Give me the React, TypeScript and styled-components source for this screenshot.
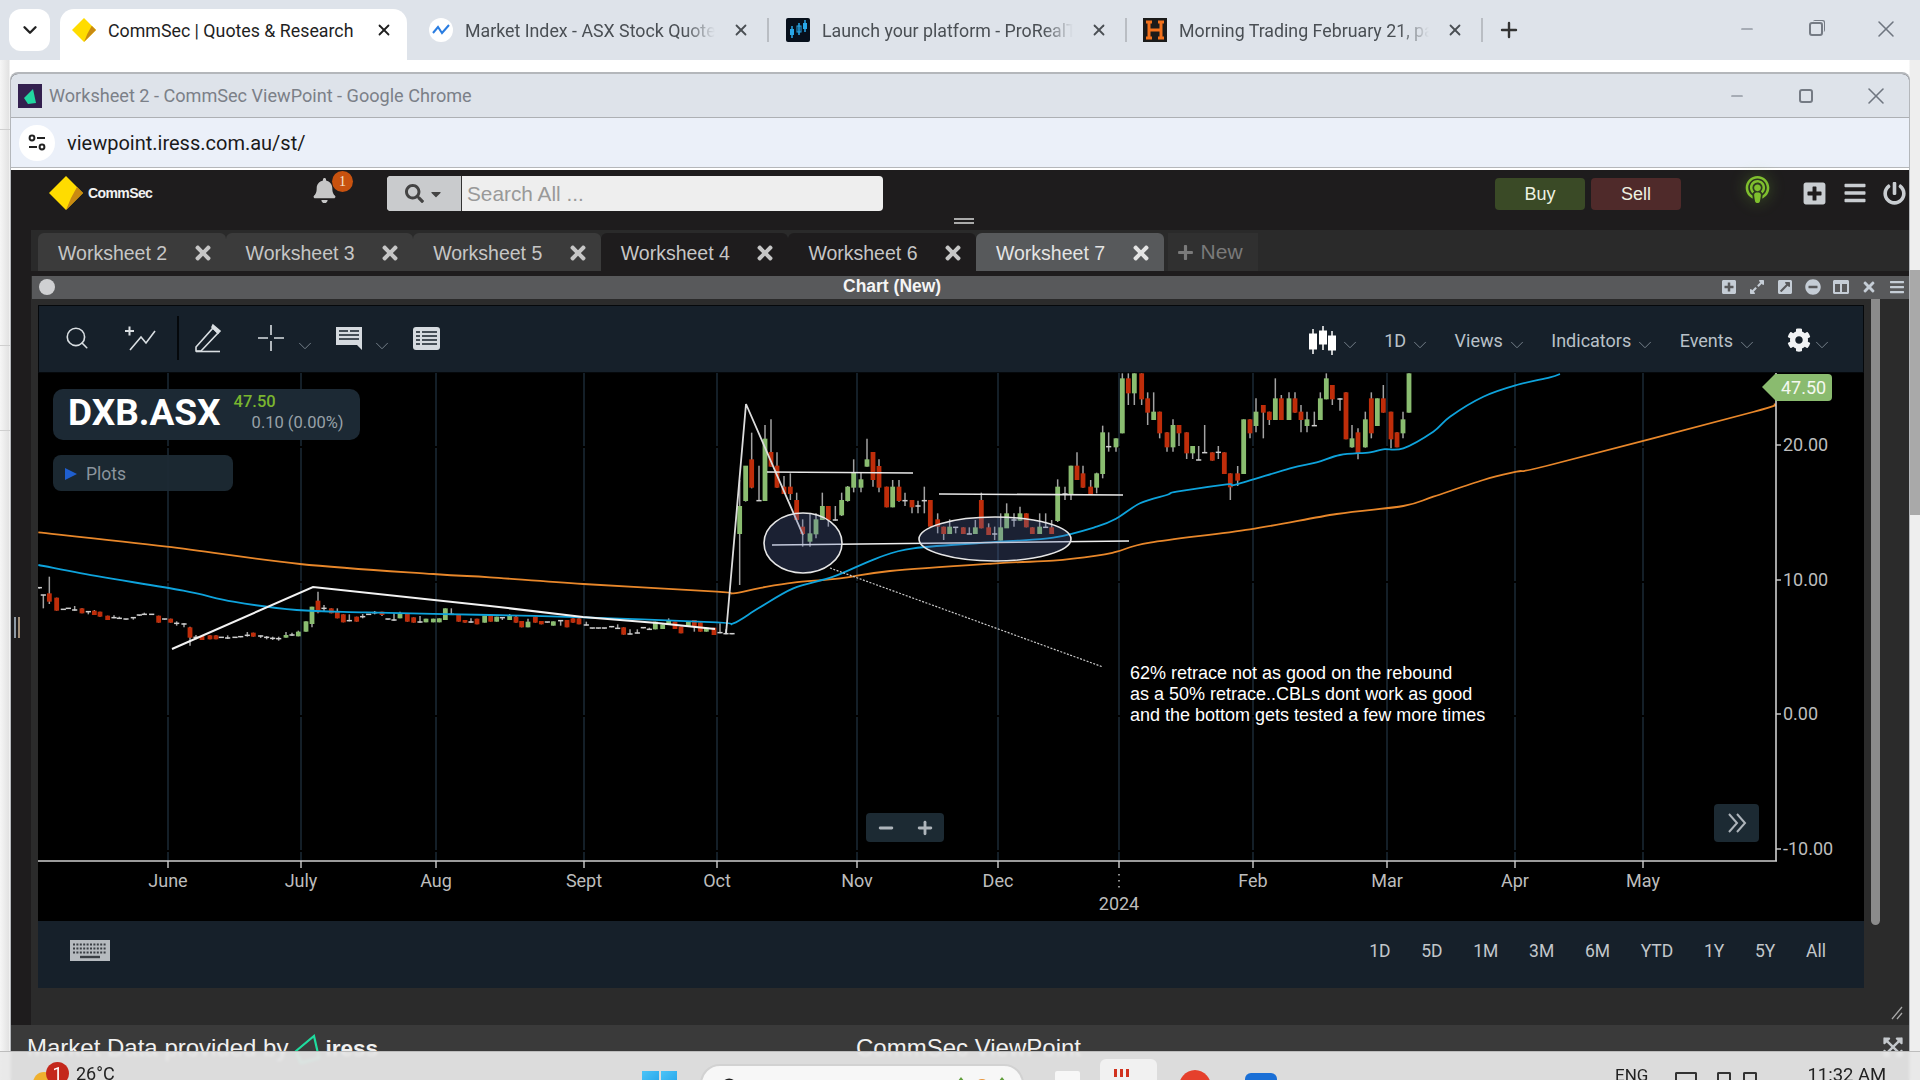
import React from 'react';
import styled, { createGlobalStyle } from 'styled-components';
import { Minus, Plus, Search, X, ChevronDown } from 'lucide-react';
import {
  FaBars,
  FaBell,
  FaCaretDown,
  FaCog,
  FaColumns,
  FaExpandAlt,
  FaExpandArrowsAlt,
  FaExternalLinkSquareAlt,
  FaMinusCircle,
  FaPlus,
  FaPlusSquare,
  FaPodcast,
  FaPowerOff,
  FaSearch,
  FaTimes,
} from 'react-icons/fa';

const sans = '"Liberation Sans", Arial, sans-serif';
const roboto = 'Roboto, "Liberation Sans", sans-serif';

const GlobalStyle = createGlobalStyle`
  html, body {
    margin: 0;
    width: 1920px;
    height: 1080px;
    overflow: hidden;
    background: #fff;
  }
  * { box-sizing: border-box; }
`;

const Screen = styled.div`
  position: relative;
  width: 1920px;
  height: 1080px;
  overflow: hidden;
  display: flex;
  flex-direction: column;
  font-family: ${roboto};
`;

/* outer browser */
const OuterStrip = styled.div`
  height: 60px;
  flex: none;
  background: #dee3ea;
  display: flex;
  align-items: flex-start;
  padding: 9px 0 0 9px;
`;

const TabListButton = styled.div`
  width: 41px;
  height: 42px;
  border-radius: 12px;
  background: #fff;
  display: flex;
  align-items: center;
  justify-content: center;
  color: #222;
  margin-right: 10px;
`;

const OuterTab = styled.div<{ $active?: boolean; $w: number; $pl: number }>`
  width: ${(p) => p.$w}px;
  height: 51px;
  flex: none;
  display: flex;
  align-items: center;
  padding: 0 ${(p) => (p.$active ? 14 : 17)}px 9px ${(p) => p.$pl}px;
  gap: 12px;
  border-radius: 14px 14px 0 0;
  background: ${(p) => (p.$active ? '#fff' : 'transparent')};
  color: ${(p) => (p.$active ? '#1f1f1f' : '#4a4f54')};
`;

const OuterTabTitle = styled.div<{ $fade?: boolean }>`
  flex: 1;
  overflow: hidden;
  white-space: nowrap;
  font-size: 17.8px;
  margin-right: ${(p) => (p.$fade ? 5 : 0)}px;
  mask-image: ${(p) => (p.$fade ? 'linear-gradient(to right, #000 88%, transparent 100%)' : 'none')};
`;

const OuterSeparator = styled.div`
  width: 2px;
  height: 24px;
  margin: 9px 0 0;
  background: #b9bdc3;
  flex: none;
`;

const NewTabButton = styled.div`
  margin: 9px 0 0 14px;
  color: #333;
  display: flex;
`;

const WindowControls = styled.div<{ $inner?: boolean }>`
  margin-left: auto;
  display: flex;
  align-items: center;
  gap: 49px;
  padding-right: ${(p) => (p.$inner ? 19 : 20)}px;
  color: #6f7680;
  height: 40px;
`;

const MinimizeIcon = styled(Minus)`
  margin-right: 4px;
`;

const RestoreIcon = styled.span<{ $double?: boolean }>`
  display: block;
  width: 14px;
  height: 14px;
  border: 2px solid #757b84;
  border-radius: 3px;
  box-shadow: ${(p) => (p.$double ? '2px -2px 0 -1px #dee3ea, 3px -3px 0 -1px #757b84' : 'none')};
`;

const OuterPage = styled.div`
  position: relative;
  flex: 1;
  min-height: 0;
  padding: 12px 10px 0;
  background: linear-gradient(to right, #f6f6f6, #e2e2e2 9px, #fff 10px, #fff 1909px, #eeeeee 1910px);
`;

const EdgeLine = styled.div<{ $top: number }>`
  position: absolute;
  left: 0;
  top: ${(p) => p.$top}px;
  width: 10px;
  height: 1px;
  background: #cfcfcf;
`;

const OuterThumb = styled.div`
  position: absolute;
  right: 0;
  top: 210px;
  width: 10px;
  height: 245px;
  background: #a9a9a9;
`;

/* inner window */
const InnerWindow = styled.div`
  height: 100%;
  display: flex;
  flex-direction: column;
  overflow: hidden;
  border: 1px solid #b4b7bb;
  border-top-width: 2px;
  border-bottom: none;
  border-radius: 8px 8px 0 0;
  background: #1e1c1d;
`;

const InnerTitleBar = styled.div`
  height: 44px;
  flex: none;
  display: flex;
  align-items: center;
  padding-left: 7px;
  gap: 7px;
  background: #dee3ea;
  border-bottom: 1px solid #adb0b4;
  color: #7b8088;
  font-size: 18.1px;
`;

const AddressBar = styled.div`
  height: 50px;
  flex: none;
  display: flex;
  align-items: center;
  padding-left: 8px;
  gap: 12px;
  background: #ebf0f9;
  border-bottom: 1px solid #b5b7ba;
  color: #1a1a1a;
  font-size: 20px;
`;

const SiteInfo = styled.div`
  width: 36px;
  height: 36px;
  border-radius: 50%;
  background: #fff;
  display: flex;
  align-items: center;
  justify-content: center;
`;

const WhiteRule = styled.div`
  height: 2px;
  flex: none;
  background: #fff;
`;

/* viewpoint header */
const AppHeader = styled.div`
  position: relative;
  height: 60px;
  flex: none;
  display: flex;
  align-items: flex-start;
  padding: 6px 0 0 38px;
  background: #1e1c1d;
`;

const Brand = styled.div`
  display: flex;
  align-items: center;
  gap: 5px;
  width: 263px;
  height: 34px;
  color: #f2f2f2;
  font-family: ${sans};
  font-size: 14px;
  font-weight: 700;
  letter-spacing: -0.6px;
`;

const BellWrap = styled.div`
  position: relative;
  width: 75px;
  height: 34px;
  color: #c6c6c6;
  padding-top: 2px;
`;

const Badge = styled.div`
  position: absolute;
  left: 20px;
  top: -5px;
  width: 21px;
  height: 21px;
  border-radius: 50%;
  background: #c8520f;
  color: #f4e4d4;
  font-family: "Liberation Serif", serif;
  font-size: 14px;
  line-height: 21px;
  text-align: center;
`;

const SearchBox = styled.div`
  width: 496px;
  height: 35px;
  display: flex;
  border-radius: 4px;
  overflow: hidden;
  background: #eeeeee;
`;

const SearchButton = styled.div`
  width: 75px;
  flex: none;
  display: flex;
  align-items: center;
  justify-content: center;
  gap: 4px;
  background: #c9cbcd;
  border-right: 1px solid #333;
  color: #444;
`;

const SearchPlaceholder = styled.div`
  padding-left: 5px;
  font-family: ${sans};
  font-size: 20.8px;
  line-height: 35px;
  color: #999;
`;

const TradeButton = styled.div<{ $sell?: boolean }>`
  width: 90px;
  height: 32px;
  margin: 2px 0 0 ${(p) => (p.$sell ? 6 : 612)}px;
  border-radius: 4px;
  background: ${(p) => (p.$sell ? '#4f2a2a' : '#3a4a26')};
  color: #eef2e2;
  font-family: ${sans};
  font-size: 18px;
  line-height: 32px;
  text-align: center;
`;

const LiveIcon = styled.div`
  margin-left: 63px;
  color: #7fbf2e;
  display: flex;
  filter: drop-shadow(0 0 8px rgba(120, 190, 50, 0.45));
`;

const HeaderIcons = styled.div`
  margin-left: 31px;
  display: flex;
  align-items: center;
  gap: 16px;
  height: 34px;
  color: #c9cdd1;
`;

const Grabber = styled.div`
  position: absolute;
  left: 943px;
  top: 48px;
  width: 20px;
  height: 6px;
  border-top: 2px solid #aaa;
  border-bottom: 2px solid #aaa;
`;

/* workspace */
const Workspace = styled.div`
  height: 795px;
  flex: none;
  display: flex;
`;

const LeftRail = styled.div`
  width: 20px;
  flex: none;
  background: #1e1c1d;
  display: flex;
  align-items: center;
  padding-left: 3px;
`;

const RailHandle = styled.div`
  width: 6px;
  height: 21px;
  border-left: 2px solid #8f9aa5;
  border-right: 2px solid #a38f78;
`;

const WorkColumn = styled.div`
  flex: 1;
  min-width: 0;
  display: flex;
  flex-direction: column;
  background: #2b2b2b;
`;

const SheetTabs = styled.div`
  height: 46px;
  flex: none;
  display: flex;
  align-items: flex-start;
  padding: 3px 0 0 7px;
  background: linear-gradient(to bottom, #2a2a2a 41px, #1e1c1d 41px);
`;

const SheetTab = styled.div<{ $tone: 'mid' | 'dark' | 'active' }>`
  width: 187.6px;
  height: 38px;
  display: flex;
  align-items: center;
  justify-content: space-between;
  padding: 2px 12px 0 20px;
  border-radius: 6px 6px 0 0;
  font-family: ${sans};
  font-size: 19.5px;
  color: ${(p) => (p.$tone === 'active' ? '#e4e4e4' : '#c6c6c6')};
  background: ${(p) => (p.$tone === 'active' ? '#57595b' : p.$tone === 'mid' ? '#3b3b3b' : '#1e1c1d')};
`;

const NewSheet = styled.div`
  width: 90px;
  height: 38px;
  margin-left: 4px;
  display: flex;
  align-items: center;
  padding: 0 0 0 9px;
  gap: 7px;
  background: #303030;
  color: #7a7a7a;
  font-family: ${sans};
  font-size: 21px;
`;

const PanelTitle = styled.div`
  height: 23px;
  flex: none;
  display: flex;
  align-items: center;
  padding: 0 0 1px 7px;
  background: #58595b;
  margin-left: 1px;
`;

const PanelDot = styled.div`
  width: 16px;
  height: 16px;
  border-radius: 50%;
  background: #cfd0d2;
  flex: none;
`;

const PanelName = styled.div`
  margin: 0 0 2px 788px;
  font-family: ${sans};
  font-size: 17.5px;
  font-weight: 700;
  color: #f5f5f5;
`;

const PanelIcons = styled.div`
  margin-left: auto;
  display: flex;
  align-items: center;
  gap: 12px;
  padding-right: 4px;
  color: #c5cdd6;
`;

const PanelBody = styled.div`
  position: relative;
  flex: 1;
  min-height: 0;
  display: flex;
  padding: 6px 0 0 7px;
`;

const ChartColumn = styled.div`
  width: 1826px;
  flex: none;
  display: flex;
  flex-direction: column;
`;

const PanelScroll = styled.div`
  width: 9px;
  height: 626px;
  margin: -6px 0 0 7px;
  border-radius: 0 0 5px 5px;
  background: #8b8b8b;
`;

const ResizeGrip = styled.div`
  position: absolute;
  right: 6px;
  bottom: 5px;
  display: flex;
  color: #a8a8a8;
`;

const Toolbar = styled.div`
  height: 68px;
  flex: none;
  display: flex;
  align-items: center;
  padding: 0 30px 2px 7px;
  background: #16202a;
  border: 1px solid #05080b;
  color: #d9dee2;
`;

const ToolButton = styled.div<{ $w: number; $ml?: number; $drop?: boolean }>`
  width: ${(p) => p.$w}px;
  margin-left: ${(p) => p.$ml ?? 0}px;
  padding-top: ${(p) => (p.$drop ? 6 : 0)}px;
  flex: none;
  display: flex;
  align-items: center;
  justify-content: center;
`;

const ToolSeparator = styled.div`
  width: 2px;
  height: 44px;
  margin-left: 5px;
  background: #05080b;
  flex: none;
`;

const Caret = styled.span`
  display: flex;
  color: #7c8791;
  margin-top: 10px;
`;

const ToolMenus = styled.div`
  margin-left: auto;
  margin-top: 4px;
  display: flex;
  align-items: center;
`;

const ToolMenu = styled.div<{ $ml?: number; $gap?: number }>`
  display: flex;
  align-items: center;
  gap: ${(p) => p.$gap ?? 3}px;
  margin-left: ${(p) => p.$ml ?? 23.5}px;
  font-size: 18px;
  color: #b9c1c8;
`;

const PlotArea = styled.div`
  position: relative;
  height: 548px;
  flex: none;
  background: #000;
`;

const ChartSvg = styled.svg`
  display: block;
  width: 1826px;
  height: 548px;
`;

const QuoteCard = styled.div`
  position: absolute;
  left: 15px;
  top: 16px;
  width: 307px;
  height: 51px;
  display: flex;
  align-items: center;
  padding-left: 15px;
  border-radius: 10px;
  background: #1c2934;
`;

const Symbol = styled.div`
  margin-top: -5px;
  font-size: 37px;
  font-weight: 700;
  color: #fff;
`;

const QuoteFigures = styled.div`
  margin: -5px 0 0 13px;
  font-size: 16.5px;
  line-height: 21px;
`;

const LastPrice = styled.div`
  color: #7ab52f;
  font-weight: 500;
`;

const PriceChange = styled.div`
  margin-left: 18px;
  color: #98a1a8;
`;

const PlotsCard = styled.div`
  position: absolute;
  left: 15px;
  top: 82px;
  width: 180px;
  height: 36px;
  display: flex;
  align-items: center;
  gap: 9px;
  padding: 1px 0 0 12px;
  border-radius: 8px;
  background: rgba(29, 42, 52, 0.94);
  color: #8b959d;
  font-size: 17.5px;
`;

const PlotsArrow = styled.span`
  width: 0;
  height: 0;
  border-left: 12px solid #1f5fcf;
  border-top: 6.5px solid transparent;
  border-bottom: 6.5px solid transparent;
`;

const ZoomControl = styled.div`
  position: absolute;
  left: 828px;
  top: 440px;
  width: 78px;
  height: 29px;
  display: flex;
  align-items: center;
  justify-content: space-around;
  border-radius: 4px;
  background: #1c2a33;
  color: #aeb5bb;
`;

const ScrollEnd = styled.div`
  position: absolute;
  left: 1676px;
  top: 431px;
  width: 45px;
  height: 38px;
  display: flex;
  align-items: center;
  justify-content: center;
  border-radius: 4px;
  background: #1c2a33;
  color: #aeb5bb;
`;

const PriceTag = styled.div`
  position: absolute;
  left: 1737px;
  top: 1px;
  width: 57px;
  height: 27px;
  border-radius: 0 4px 4px 0;
  background: #8abb6f;
  color: #f4f8f0;
  font-size: 18px;
  line-height: 27px;
  padding-left: 6px;
  &::before {
    content: '';
    position: absolute;
    left: -13px;
    top: 0;
    border-right: 13px solid #8abb6f;
    border-top: 13.5px solid transparent;
    border-bottom: 13.5px solid transparent;
  }
`;

const RangeBar = styled.div`
  height: 67px;
  flex: none;
  display: flex;
  align-items: center;
  padding: 0 38px 8px 32px;
  background: #16202a;
`;

const RangeList = styled.div`
  margin-left: auto;
  display: flex;
  gap: 30.7px;
  font-size: 17.5px;
  color: #c2c7cb;
`;

/* footer */
const Footer = styled.div`
  height: 60px;
  flex: none;
  display: grid;
  grid-template-columns: 1fr auto 1fr;
  padding: 9px 5px 0 16px;
  background: #3a3a3a;
  color: #f0f0f0;
  font-family: ${sans};
  font-size: 24px;
`;

const FooterLeft = styled.div`
  display: flex;
  align-items: flex-start;
  gap: 6px;
`;

const IressName = styled.span`
  margin: 2px 0 0 -1px;
  font-size: 22.5px;
  font-weight: 700;
`;

const FooterCenter = styled.div`
  margin-left: 6px;
`;

const FooterRight = styled.div`
  justify-self: end;
  color: #c4c8cc;
  display: flex;
  padding-top: 2px;
`;

/* taskbar */
const Taskbar = styled.div`
  position: absolute;
  left: 0;
  right: 0;
  bottom: 0;
  height: 29px;
  display: flex;
  overflow: hidden;
  background: rgba(232, 232, 232, 0.93);
  backdrop-filter: blur(1.5px);
  border-top: 1px solid #bdbdbd;
  color: #222;
`;

const Weather = styled.div`
  position: relative;
  width: 113px;
  margin-left: 33px;
  flex: none;
  font-size: 18px;
  padding: 12px 0 0 43px;
  line-height: 20px;
`;

const Sun = styled.div`
  position: absolute;
  left: 0;
  top: 20px;
  width: 22px;
  height: 22px;
  border-radius: 50%;
  background: #efb02e;
`;

const WeatherBadge = styled.div`
  position: absolute;
  left: 13px;
  top: 10px;
  width: 23px;
  height: 23px;
  border-radius: 50%;
  background: #c4281c;
  color: #fff;
  font-size: 18px;
  line-height: 23px;
  text-align: center;
`;

const StartTiles = styled.div`
  width: 35px;
  margin: 19px 0 0 496px;
  flex: none;
  display: grid;
  grid-template-columns: 1fr 1fr;
  gap: 2px;
`;

const StartTile = styled.div`
  height: 20px;
  background: linear-gradient(135deg, #4cc4f7, #1e9fe8);
`;

const TaskSearch = styled.div`
  width: 324px;
  height: 40px;
  margin: 12px 0 0 23px;
  flex: none;
  display: flex;
  align-items: flex-start;
  justify-content: space-between;
  padding: 11px 10px 0 18px;
  border: 2px solid #d2d2d2;
  border-radius: 22px;
  background: #f7f7f7;
  color: #222;
`;

const SearchArt = styled.div`
  display: flex;
  gap: 5px;
`;

const TaskIconBox = styled.div<{ $ml: number; $w: number; $bg: string; $top: number; $radius?: string }>`
  width: ${(p) => p.$w}px;
  height: 40px;
  margin: ${(p) => p.$top}px 0 0 ${(p) => p.$ml}px;
  flex: none;
  background: ${(p) => p.$bg};
  border-radius: ${(p) => p.$radius ?? '4px'};
`;

const AppTile = styled.div`
  width: 57px;
  height: 40px;
  margin: 7px 0 0 20px;
  flex: none;
  padding: 10px 0 0 14px;
  border-radius: 6px;
  background: #f1f1f1;
`;

const AppDots = styled.div`
  width: 15px;
  height: 8px;
  background: repeating-linear-gradient(to right, #d1321f 0 3px, transparent 3px 6px);
`;

const Tray = styled.div`
  margin-left: 338px;
  display: flex;
  align-items: flex-start;
  padding-top: 13px;
  font-size: 17px;
  line-height: 20px;
`;

const TrayGlyph = styled.div<{ $ml: number; $w: number }>`
  width: ${(p) => p.$w}px;
  height: 12px;
  margin: 7px 0 0 ${(p) => p.$ml}px;
  border: 2px solid #333;
  border-bottom: none;
  border-radius: 2px 2px 0 0;
`;

const Clock = styled.div`
  margin-left: 50px;
  font-size: 18.5px;
  white-space: nowrap;
`;

/* artwork */
const Diamond = ({ size = 34 }: { size?: number }) => (
  <svg width={size} height={size} viewBox="0 0 34 34">
    <polygon points="17,0 34,17 17,34 0,17" fill="#ffdc00" />
    <polygon points="28,11 34,17 17,34 22,22" fill="#c98a12" />
  </svg>
);

const MarketIndexIcon = () => (
  <svg width="24" height="24" viewBox="0 0 24 24">
    <circle cx="12" cy="12" r="12" fill="#fff" />
    <path d="M4 15 9 9l4 6 7-8" fill="none" stroke="#2a7de1" strokeWidth="2" />
  </svg>
);

const ProRealIcon = () => (
  <svg width="24" height="24" viewBox="0 0 24 24">
    <rect width="24" height="24" rx="2" fill="#07101c" />
    <path d="M6 8v12M13 5v12M19 2v12" stroke="#29a7e8" strokeWidth="1.5" />
    <rect x="4" y="11" width="4" height="6" fill="#29a7e8" />
    <rect x="11" y="8" width="4" height="6" fill="none" stroke="#29a7e8" />
    <rect x="17" y="5" width="4" height="6" fill="#29a7e8" />
  </svg>
);

const HeadlineIcon = () => (
  <svg width="24" height="24" viewBox="0 0 24 24">
    <rect width="24" height="24" fill="#1a1a1a" />
    <path d="M3 4h6M15 4h6M3 20h6M15 20h6M6 4v16M18 4v16M6 12h12" stroke="#f2711c" strokeWidth="3" fill="none" />
  </svg>
);

const IressFavicon = () => (
  <svg width="24" height="24" viewBox="0 0 24 24">
    <rect width="24" height="24" fill="#33204f" />
    <polygon points="15,5 18,19 10,20 6,14" fill="#22d6a0" />
  </svg>
);

const SiteInfoIcon = () => (
  <svg width="20" height="20" viewBox="0 0 20 20" fill="none" stroke="#222" strokeWidth="2">
    <circle cx="5" cy="5" r="2.4" />
    <path d="M10 5h8M2 14h8" />
    <circle cx="15" cy="14" r="2.4" />
  </svg>
);

const AddLineIcon = () => (
  <svg width="34" height="28" viewBox="0 0 34 28" fill="none" stroke="currentColor" strokeWidth="1.6">
    <path d="M2 7h9M6.5 2.5v9" strokeWidth="2" />
    <path d="M7 26l11-13 5 6 9-12" />
  </svg>
);

const PencilIcon = () => (
  <svg width="28" height="30" viewBox="0 0 28 30" fill="none" stroke="currentColor" strokeWidth="1.6">
    <path d="M2 24 19 5l5 5L7 28H2z" />
    <path d="M19 2l7 6-2 2-6-6z" fill="currentColor" />
    <path d="M2 28.5h24" />
  </svg>
);

const CrossIcon = () => (
  <svg width="26" height="26" viewBox="0 0 26 26" stroke="currentColor" strokeWidth="1.6">
    <path d="M0 13h10M16 13h10M13 0v10M13 16v10" />
  </svg>
);

const CommentIcon = () => (
  <svg width="27" height="24" viewBox="0 0 27 24">
    <path d="M0 1h26v23l-5-5H0z" fill="#d5dadf" />
    <path d="M3 5h9M3 9h20M3 13h20M14 5h9" stroke="#16202a" strokeWidth="1.4" />
  </svg>
);

const TableIcon = () => (
  <svg width="27" height="23" viewBox="0 0 27 23">
    <rect width="27" height="23" rx="3" fill="#d5dadf" />
    <path d="M3 5h4M9 5h15M3 9h4M9 9h15M3 13h4M9 13h15M3 17h4M9 17h15" stroke="#16202a" strokeWidth="1.3" />
  </svg>
);

const CandlesIcon = () => (
  <svg width="27" height="29" viewBox="0 0 27 29" fill="#fff" stroke="#fff">
    <path d="M4 3v25M14 0v24M23 5v24" strokeWidth="1.5" />
    <rect x="0.5" y="8" width="7" height="15" />
    <rect x="10.5" y="5" width="7" height="13" />
    <rect x="19.5" y="10" width="7" height="14" />
  </svg>
);

const DoubleChevron = () => (
  <svg width="22" height="22" viewBox="0 0 22 22" fill="none" stroke="currentColor" strokeWidth="2">
    <path d="M3 2l8 9-8 9M11 2l8 9-8 9" />
  </svg>
);

const KeyboardIcon = () => (
  <svg width="40" height="21" viewBox="0 0 40 21">
    <rect width="40" height="21" fill="#b6bbbf" />
    <path d="M3 4.5h34M3 8.5h34M3 12.5h34" stroke="#3a3f44" strokeWidth="2" strokeDasharray="2 1.4" />
    <path d="M10 17h20" stroke="#3a3f44" strokeWidth="2.4" />
  </svg>
);

const IressMark = () => (
  <svg width="26" height="30" viewBox="0 0 26 30" fill="none" stroke="#1fdc9e" strokeWidth="2.2">
    <polygon points="2,17 20,2 25,24 7,29" />
  </svg>
);

const GripIcon = () => (
  <svg width="12" height="14" viewBox="0 0 12 14" stroke="currentColor" strokeWidth="1.3">
    <path d="M1 13 11 1M6 13l5-6" />
  </svg>
);

/* chart data: rows were read off zoomed crops, so each section keeps its own origin */
type Row = [number, number, number, number, number, 'r' | 'g' | 'd'];
type Candle = { x: number; wickTop: number; wickBottom: number; bodyTop: number; bodyBottom: number; kind: Row[5] };

const section = (ox: number, oy: number, rows: Row[]): Candle[] =>
  rows.map(([x, wt, wb, bt, bb, kind]) => ({
    x: ox + x / 3,
    wickTop: oy + wt / 3,
    wickBottom: oy + wb / 3,
    bodyTop: oy + bt / 3,
    bodyBottom: oy + bb / 3,
    kind,
  }));

const trace = (ox: number, oy: number, pts: number[][]) => pts.map(([x, y]) => [ox + x / 3, oy + y / 3]);

// catmull-rom through the read-off points, the moving averages are curves in the picture
const smooth = (pts: number[][]) => {
  let d = `M${pts[0][0]} ${pts[0][1]}`;
  for (let i = 0; i < pts.length - 1; i += 1) {
    const p0 = pts[i - 1] ?? pts[i];
    const p1 = pts[i];
    const p2 = pts[i + 1];
    const p3 = pts[i + 2] ?? p2;
    const c1 = [p1[0] + (p2[0] - p0[0]) / 6, p1[1] + (p2[1] - p0[1]) / 6];
    const c2 = [p2[0] - (p3[0] - p1[0]) / 6, p2[1] - (p3[1] - p1[1]) / 6];
    d += `C${c1[0].toFixed(1)} ${c1[1].toFixed(1)} ${c2[0].toFixed(1)} ${c2[1].toFixed(1)} ${p2[0].toFixed(1)} ${p2[1].toFixed(1)}`;
  }
  return d;
};

const candles: Candle[] = [
  ...section(0, 280, [
    [118, 922, 926, 923, 923, 'd'], [130, 945, 985, 945, 945, 'd'], [148, 890, 972, 940, 965, 'r'], [170, 953, 992, 953, 992, 'r'],
    [190, 988, 990, 988, 988, 'd'], [205, 985, 987, 985, 985, 'd'], [224, 978, 992, 990, 990, 'd'], [246, 985, 1000, 985, 1000, 'r'],
    [265, 995, 1003, 995, 995, 'd'], [283, 990, 1005, 992, 1005, 'r'], [300, 995, 1010, 995, 1010, 'r'], [323, 1007, 1020, 1007, 1020, 'r'],
    [342, 1006, 1015, 1013, 1013, 'd'], [358, 1010, 1017, 1015, 1015, 'd'], [378, 1017, 1019, 1017, 1017, 'd'], [400, 1012, 1019, 1013, 1013, 'd'],
    [418, 1005, 1008, 1005, 1005, 'd'], [433, 998, 1005, 1003, 1003, 'd'], [455, 1003, 1005, 1003, 1003, 'd'], [476, 1007, 1028, 1007, 1028, 'r'],
    [494, 1017, 1019, 1017, 1017, 'd'], [512, 1016, 1028, 1016, 1028, 'r'], [530, 1024, 1037, 1030, 1030, 'd'], [552, 1030, 1042, 1032, 1032, 'd'],
    [570, 1040, 1097, 1042, 1073, 'r'], [588, 1065, 1078, 1072, 1072, 'd'], [606, 1068, 1080, 1068, 1080, 'r'], [630, 1066, 1078, 1066, 1078, 'r'],
    [648, 1066, 1078, 1066, 1078, 'r'], [664, 1072, 1074, 1072, 1072, 'd'], [683, 1066, 1077, 1074, 1074, 'd'], [705, 1072, 1074, 1072, 1072, 'd'],
    [722, 1070, 1072, 1070, 1070, 'd'], [742, 1056, 1070, 1066, 1066, 'd'], [760, 1058, 1070, 1058, 1070, 'r'], [782, 1066, 1074, 1068, 1068, 'd'],
    [800, 1068, 1078, 1072, 1072, 'd'], [818, 1070, 1080, 1075, 1075, 'd'], [836, 1070, 1082, 1076, 1076, 'd'], [858, 1056, 1073, 1065, 1073, 'g'],
    [876, 1058, 1068, 1065, 1065, 'd'], [895, 1052, 1069, 1055, 1069, 'g'], [918, 1024, 1055, 1024, 1055, 'g'], [936, 980, 1042, 980, 1032, 'g'],
    [954, 935, 1000, 962, 997, 'r'], [972, 975, 995, 985, 985, 'd'], [994, 985, 1000, 985, 1000, 'r'], [1012, 985, 1015, 995, 1015, 'r'],
    [1030, 1003, 1027, 1003, 1027, 'r'], [1048, 1003, 1024, 1022, 1022, 'd'], [1070, 1010, 1025, 1010, 1025, 'r'], [1088, 1002, 1015, 1010, 1010, 'd'],
    [1106, 1003, 1005, 1003, 1003, 'd'], [1124, 993, 1003, 998, 998, 'd'], [1146, 995, 1008, 995, 1005, 'r'], [1164, 1017, 1019, 1017, 1017, 'd'],
    [1182, 1000, 1022, 1020, 1020, 'd'], [1200, 995, 1015, 1002, 1015, 'g'], [1222, 1002, 1025, 1002, 1025, 'r'], [1241, 1012, 1028, 1012, 1028, 'r'],
    [1260, 1008, 1028, 1026, 1026, 'd'], [1278, 1016, 1027, 1016, 1027, 'g'], [1300, 1016, 1027, 1016, 1027, 'g'], [1318, 1015, 1027, 1015, 1027, 'g'],
    [1336, 985, 1020, 985, 1020, 'g'], [1354, 985, 1005, 1003, 1003, 'd'], [1376, 1005, 1025, 1005, 1025, 'r'], [1395, 1020, 1028, 1020, 1028, 'r'],
    [1413, 1015, 1028, 1026, 1026, 'd'], [1431, 1016, 1033, 1016, 1033, 'r'], [1454, 1007, 1028, 1007, 1028, 'g'], [1472, 1007, 1025, 1007, 1025, 'r'],
    [1490, 1010, 1025, 1010, 1025, 'g'],
  ]),
  ...section(490, 570, [
    [37, 143, 150, 143, 143, 'd'], [59, 132, 150, 135, 150, 'g'], [78, 135, 158, 140, 158, 'r'], [95, 153, 172, 153, 172, 'r'],
    [114, 146, 172, 155, 172, 'g'], [136, 140, 158, 140, 158, 'r'], [154, 153, 163, 153, 163, 'r'], [172, 156, 158, 156, 156, 'd'],
    [190, 154, 167, 154, 167, 'g'], [212, 152, 167, 152, 152, 'd'], [231, 150, 172, 150, 172, 'r'], [249, 145, 158, 145, 158, 'r'],
    [267, 145, 163, 145, 163, 'r'], [289, 155, 166, 165, 165, 'd'], [307, 174, 176, 174, 174, 'd'], [325, 174, 176, 174, 174, 'd'],
    [343, 174, 176, 174, 174, 'd'], [365, 170, 172, 170, 170, 'd'], [383, 163, 176, 175, 175, 'd'], [401, 172, 194, 172, 194, 'r'],
    [420, 178, 193, 192, 192, 'd'], [442, 178, 190, 189, 189, 'd'], [460, 173, 175, 173, 173, 'd'], [478, 173, 180, 178, 178, 'd'],
    [496, 155, 178, 155, 178, 'g'], [518, 163, 177, 163, 177, 'g'], [536, 145, 163, 150, 163, 'g'], [555, 155, 177, 155, 177, 'r'],
    [573, 170, 190, 170, 190, 'r'], [595, 155, 168, 155, 168, 'g'], [613, 150, 185, 150, 170, 'r'], [631, 157, 185, 157, 185, 'r'],
    [649, 173, 185, 173, 185, 'g'], [672, 173, 195, 173, 195, 'r'], [690, 160, 190, 188, 188, 'd'], [708, 178, 193, 191, 191, 'd'],
    [726, 191, 193, 191, 191, 'd'],
  ]),
  ...section(700, 370, [
    [119, 330, 645, 408, 492, 'g'], [137, 290, 395, 287, 393, 'g'], [155, 188, 355, 268, 353, 'r'], [177, 287, 393, 392, 392, 'd'],
    [195, 165, 393, 206, 393, 'g'], [213, 148, 290, 246, 290, 'r'], [231, 247, 353, 287, 353, 'r'], [252, 318, 372, 350, 372, 'r'],
    [271, 310, 390, 350, 372, 'r'], [290, 368, 450, 390, 450, 'r'], [308, 448, 530, 470, 492, 'r'], [330, 430, 530, 490, 515, 'g'],
    [348, 430, 505, 448, 493, 'g'], [367, 368, 450, 408, 450, 'g'], [385, 408, 470, 408, 450, 'r'], [406, 408, 452, 450, 450, 'd'],
    [425, 368, 438, 390, 436, 'g'], [443, 348, 395, 350, 393, 'g'], [461, 268, 367, 308, 353, 'g'], [483, 308, 367, 328, 353, 'g'],
    [501, 206, 290, 268, 290, 'g'], [519, 246, 350, 246, 330, 'r'], [537, 268, 367, 288, 353, 'r'], [560, 350, 412, 350, 412, 'r'],
    [578, 330, 412, 350, 412, 'g'], [597, 330, 395, 350, 393, 'r'], [615, 368, 408, 392, 392, 'd'], [636, 390, 430, 390, 412, 'r'],
    [654, 392, 430, 408, 408, 'd'], [673, 350, 430, 392, 392, 'd'], [691, 390, 470, 390, 470, 'r'], [713, 430, 490, 448, 470, 'r'],
    [731, 470, 510, 470, 492, 'r'], [749, 448, 492, 470, 492, 'g'], [767, 472, 490, 472, 472, 'd'], [790, 472, 492, 472, 492, 'r'],
    [808, 472, 492, 492, 492, 'd'], [826, 450, 492, 472, 492, 'g'], [844, 368, 475, 390, 475, 'r'], [866, 460, 495, 472, 495, 'r'],
    [884, 470, 510, 492, 492, 'd'], [902, 430, 512, 472, 512, 'g'], [920, 400, 472, 430, 475, 'g'], [942, 430, 470, 450, 450, 'd'],
    [960, 410, 452, 430, 452, 'g'], [979, 430, 472, 430, 472, 'r'], [997, 472, 492, 472, 492, 'r'], [1019, 430, 492, 470, 492, 'g'],
    [1037, 430, 472, 472, 472, 'd'], [1055, 450, 492, 472, 492, 'r'], [1073, 328, 456, 350, 453, 'g'], [1095, 350, 390, 372, 372, 'd'],
    [1113, 287, 390, 287, 373, 'g'], [1131, 247, 330, 287, 330, 'r'], [1149, 287, 353, 310, 353, 'r'], [1172, 330, 372, 350, 372, 'r'],
    [1190, 308, 370, 310, 353, 'g'], [1208, 167, 325, 187, 312, 'g'], [1226, 187, 245, 230, 230, 'd'], [1248, 205, 245, 205, 232, 'g'],
    [1267, 10, 190, 25, 190, 'g'], [1285, 10, 105, 25, 70, 'r'], [1303, 10, 105, 10, 70, 'g'], [1325, 10, 105, 10, 88, 'r'],
    [1343, 67, 165, 85, 128, 'r'], [1361, 67, 150, 125, 150, 'g'], [1379, 125, 205, 125, 190, 'r'], [1401, 187, 245, 187, 232, 'r'],
    [1419, 148, 245, 165, 232, 'g'], [1437, 165, 228, 165, 190, 'r'], [1460, 187, 267, 187, 250, 'r'], [1478, 228, 267, 228, 250, 'g'],
  ]),
  ...section(1050, 370, [
    [446, 228, 270, 270, 270, 'd'], [464, 165, 248, 248, 248, 'd'], [487, 247, 272, 247, 272, 'r'], [505, 228, 267, 247, 247, 'd'],
    [523, 247, 312, 247, 312, 'r'], [541, 310, 390, 310, 352, 'r'], [563, 288, 348, 310, 332, 'r'], [581, 148, 312, 148, 312, 'g'],
    [600, 148, 205, 148, 190, 'r'], [618, 85, 187, 125, 168, 'g'], [640, 105, 205, 105, 128, 'r'], [658, 125, 165, 125, 150, 'r'],
    [676, 25, 150, 85, 150, 'g'], [694, 75, 150, 85, 150, 'r'], [717, 67, 150, 85, 150, 'g'], [735, 67, 128, 85, 128, 'r'],
    [753, 105, 187, 125, 150, 'r'], [771, 125, 187, 148, 168, 'g'], [793, 125, 167, 167, 167, 'd'], [811, 67, 150, 85, 150, 'g'],
    [829, 10, 88, 25, 88, 'g'], [847, 45, 105, 45, 88, 'r'], [870, 85, 122, 87, 87, 'd'], [888, 67, 208, 67, 208, 'r'],
    [906, 165, 233, 205, 232, 'g'], [924, 175, 268, 187, 250, 'r'], [946, 125, 233, 148, 232, 'g'], [964, 67, 205, 85, 190, 'r'],
    [982, 85, 168, 85, 168, 'g'], [1000, 45, 128, 85, 128, 'r'], [1023, 125, 235, 125, 208, 'r'], [1041, 187, 232, 187, 232, 'r'],
    [1059, 125, 205, 148, 190, 'g'], [1077, 10, 128, 10, 128, 'g'],
  ]),
];

const blueLine = smooth([
  ...trace(0, 280, [[115, 855], [300, 890], [550, 932], [700, 965], [890, 990], [1100, 997], [1470, 1005]]),
  ...trace(490, 570, [[280, 142], [680, 157], [730, 160]]),
  ...trace(700, 370, [[175, 715], [280, 655], [400, 620], [530, 565], [640, 535], [900, 515], [1060, 503], [1190, 470], [1250, 445], [1320, 400], [1400, 375]]),
  ...trace(1050, 370, [[380, 365], [530, 343], [560, 343], [720, 295], [800, 277], [870, 255], [960, 247], [1000, 238], [1060, 235], [1150, 185], [1200, 140], [1300, 80], [1400, 45], [1500, 22]]),
  [1560, 374],
]);

const orangeLine = smooth([
  ...trace(0, 280, [[115, 757], [500, 800], [900, 852], [1300, 882], [1470, 892]]),
  ...trace(490, 570, [[280, 42], [680, 65], [730, 70]]),
  ...trace(700, 370, [[175, 655], [280, 638], [420, 625], [570, 603], [890, 580], [1060, 572], [1190, 557], [1250, 545], [1350, 518]]),
  ...trace(1050, 370, [[600, 478], [860, 432], [1060, 408], [1150, 380], [1300, 330], [1400, 305], [1500, 285]]),
  [1753, 412],
  [1775, 404],
]);

const months = [
  { x: 168, label: 'June' },
  { x: 301, label: 'July' },
  { x: 436, label: 'Aug' },
  { x: 584, label: 'Sept' },
  { x: 717, label: 'Oct' },
  { x: 857, label: 'Nov' },
  { x: 998, label: 'Dec' },
  { x: 1119, label: '' },
  { x: 1253, label: 'Feb' },
  { x: 1387, label: 'Mar' },
  { x: 1515, label: 'Apr' },
  { x: 1643, label: 'May' },
];

const priceLevels = [
  { y: 445, label: '20.00' },
  { y: 580, label: '10.00' },
  { y: 714, label: '0.00' },
  { y: 849, label: '-10.00' },
];

const AXIS_FONT = { fontFamily: 'Roboto, sans-serif', fontSize: 18, fill: '#bdbdbd' };

const PriceChart = () => (
  <ChartSvg viewBox="38 373 1826 548">
    <defs>
      <clipPath id="plot">
        <rect x="38" y="373" width="1738" height="488" />
      </clipPath>
    </defs>
    {months.map((m) => (
      <line key={m.x} x1={m.x} x2={m.x} y1={373} y2={861} stroke="#1a2733" strokeWidth={1.6} />
    ))}
    {priceLevels.map((p) => (
      <line key={p.y} x1={38} x2={1776} y1={p.y + 2} y2={p.y + 2} stroke="#000" strokeWidth={2} />
    ))}
    <g clipPath="url(#plot)">
      {candles.map((c) => {
        const top = Math.min(c.bodyTop, c.bodyBottom);
        const height = Math.abs(c.bodyBottom - c.bodyTop);
        return (
          <g key={`${c.x}-${c.bodyTop}`}>
            <line x1={c.x} x2={c.x} y1={c.wickTop} y2={c.wickBottom} stroke="#a2a2a2" strokeWidth={1.5} />
            {c.kind === 'd' ? (
              <line x1={c.x - 2.6} x2={c.x + 2.6} y1={top} y2={top} stroke="#cfcfcf" strokeWidth={1.5} />
            ) : (
              <rect x={c.x - 2.4} y={top} width={4.8} height={height} fill={c.kind === 'r' ? '#bf2d0a' : '#8abd70'} />
            )}
          </g>
        );
      })}
      <path d={orangeLine} fill="none" stroke="#e8872a" strokeWidth={1.8} />
      <path d={blueLine} fill="none" stroke="#0ea3dc" strokeWidth={1.8} />
    </g>

    <polyline points="172,649 313,587 490,606 583,617 657,623 715,629" fill="none" stroke="#f2f2f2" strokeWidth={2} />
    <polyline points="726,634 746,404 803,535" fill="none" stroke="#dcdcdc" strokeWidth={1.8} />
    <line x1={767} x2={913} y1={472} y2={473} stroke="#e8e8e8" strokeWidth={1.6} />
    <line x1={939} x2={1123} y1={494} y2={495} stroke="#e8e8e8" strokeWidth={1.6} />
    <line x1={772} x2={1129} y1={545} y2={541} stroke="#f0f0f0" strokeWidth={1.6} />
    <ellipse cx={803} cy={543} rx={39} ry={30} fill="rgba(90,110,170,0.3)" stroke="#e6e6e6" strokeWidth={1.6} />
    <ellipse cx={995} cy={539} rx={76} ry={22} fill="rgba(90,110,170,0.3)" stroke="#e6e6e6" strokeWidth={1.6} />
    <line x1={830} x2={1103} y1={568} y2={667} stroke="#c8c8c8" strokeWidth={1.2} strokeDasharray="2 1.5" />

    <g fontFamily='"Liberation Sans", Arial, sans-serif' fontSize={18} fill="#fff">
      <text x={1130} y={679}>62% retrace not as good on the rebound</text>
      <text x={1130} y={700}>as a 50% retrace..CBLs dont work as good</text>
      <text x={1130} y={721}>and the bottom gets tested a few more times</text>
    </g>

    <line x1={38} x2={1777} y1={861} y2={861} stroke="#cfcfcf" strokeWidth={1.6} />
    <line x1={1776} x2={1776} y1={373} y2={861} stroke="#cfcfcf" strokeWidth={1.6} />
    {months.map((m) => (
      <g key={m.label || 'year'}>
        <line x1={m.x} x2={m.x} y1={861} y2={868} stroke="#cfcfcf" strokeWidth={1.4} />
        {m.label && (
          <text x={m.x} y={887} textAnchor="middle" {...AXIS_FONT}>
            {m.label}
          </text>
        )}
      </g>
    ))}
    <line x1={1119} x2={1119} y1={874} y2={890} stroke="#bdbdbd" strokeWidth={1.5} strokeDasharray="1.5 4.5" />
    <text x={1119} y={910} textAnchor="middle" {...AXIS_FONT}>
      2024
    </text>
    {priceLevels.map((p) => (
      <g key={p.label}>
        <line x1={1776} x2={1781} y1={p.y} y2={p.y} stroke="#cfcfcf" strokeWidth={1.4} />
        <text x={1783} y={p.y + 6} {...AXIS_FONT}>
          {p.label}
        </text>
      </g>
    ))}
  </ChartSvg>
);

const outerTabs = [
  { title: 'Market Index - ASX Stock Quotes', icon: <MarketIndexIcon />, w: 360, pl: 22 },
  { title: 'Launch your platform - ProRealTime', icon: <ProRealIcon />, w: 356, pl: 17 },
  { title: 'Morning Trading February 21, part', icon: <HeadlineIcon />, w: 354, pl: 16 },
];

const sheets: { name: string; tone: 'mid' | 'dark' | 'active' }[] = [
  { name: 'Worksheet 2', tone: 'mid' },
  { name: 'Worksheet 3', tone: 'mid' },
  { name: 'Worksheet 5', tone: 'mid' },
  { name: 'Worksheet 4', tone: 'dark' },
  { name: 'Worksheet 6', tone: 'dark' },
  { name: 'Worksheet 7', tone: 'active' },
];

const ranges = ['1D', '5D', '1M', '3M', '6M', 'YTD', '1Y', '5Y', 'All'];

const Chevron = () => (
  <Caret>
    <ChevronDown size={22} strokeWidth={1} />
  </Caret>
);

export default function App() {
  return (
    <Screen>
      <GlobalStyle />
      <OuterStrip>
        <TabListButton>
          <ChevronDown size={22} strokeWidth={2.6} />
        </TabListButton>
        <OuterTab $active $w={347} $pl={12}>
          <Diamond size={24} />
          <OuterTabTitle>CommSec | Quotes &amp; Research</OuterTabTitle>
          <X size={18} strokeWidth={2.4} />
        </OuterTab>
        {outerTabs.map((tab) => (
          <React.Fragment key={tab.title}>
            <OuterTab $w={tab.w} $pl={tab.pl}>
              {tab.icon}
              <OuterTabTitle $fade>{tab.title}</OuterTabTitle>
              <X size={18} strokeWidth={2.4} />
            </OuterTab>
            <OuterSeparator />
          </React.Fragment>
        ))}
        <NewTabButton>
          <Plus size={24} strokeWidth={2.4} />
        </NewTabButton>
        <WindowControls>
          <MinimizeIcon size={18} strokeWidth={1.6} />
          <RestoreIcon $double />
          <X size={28} strokeWidth={1.3} />
        </WindowControls>
      </OuterStrip>

      <OuterPage>
        <EdgeLine $top={69} />
        <EdgeLine $top={285} />
        <EdgeLine $top={370} />
        <OuterThumb />
        <InnerWindow>
          <InnerTitleBar>
            <IressFavicon />
            Worksheet 2 - CommSec ViewPoint - Google Chrome
            <WindowControls $inner>
              <MinimizeIcon size={18} strokeWidth={1.6} />
              <RestoreIcon />
              <X size={28} strokeWidth={1.3} />
            </WindowControls>
          </InnerTitleBar>
          <AddressBar>
            <SiteInfo>
              <SiteInfoIcon />
            </SiteInfo>
            viewpoint.iress.com.au/st/
          </AddressBar>
          <WhiteRule />

          <AppHeader>
            <Brand>
              <Diamond />
              CommSec
            </Brand>
            <BellWrap>
              <FaBell size={25} />
              <Badge>1</Badge>
            </BellWrap>
            <SearchBox>
              <SearchButton>
                <FaSearch size={19} />
                <FaCaretDown size={16} />
              </SearchButton>
              <SearchPlaceholder>Search All ...</SearchPlaceholder>
            </SearchBox>
            <TradeButton>Buy</TradeButton>
            <TradeButton $sell>Sell</TradeButton>
            <LiveIcon>
              <FaPodcast size={27} />
            </LiveIcon>
            <HeaderIcons>
              <FaPlusSquare size={25} />
              <FaBars size={24} />
              <FaPowerOff size={23} />
            </HeaderIcons>
            <Grabber />
          </AppHeader>

          <Workspace>
            <LeftRail>
              <RailHandle />
            </LeftRail>
            <WorkColumn>
              <SheetTabs>
                {sheets.map((sheet) => (
                  <SheetTab key={sheet.name} $tone={sheet.tone}>
                    {sheet.name}
                    <FaTimes size={22} />
                  </SheetTab>
                ))}
                <NewSheet>
                  <FaPlus size={17} />
                  New
                </NewSheet>
              </SheetTabs>
              <PanelTitle>
                <PanelDot />
                <PanelName>Chart (New)</PanelName>
                <PanelIcons>
                  <FaPlusSquare size={16} />
                  <FaExpandAlt size={16} />
                  <FaExternalLinkSquareAlt size={16} />
                  <FaMinusCircle size={16} />
                  <FaColumns size={16} />
                  <FaTimes size={16} />
                  <FaBars size={16} />
                </PanelIcons>
              </PanelTitle>
              <PanelBody>
                <ChartColumn>
                  <Toolbar>
                    <ToolButton $w={62}>
                      <Search size={26} strokeWidth={1.5} />
                    </ToolButton>
                    <ToolButton $w={64}>
                      <AddLineIcon />
                    </ToolButton>
                    <ToolSeparator />
                    <ToolButton $w={58}>
                      <PencilIcon />
                    </ToolButton>
                    <ToolButton $w={68}>
                      <CrossIcon />
                    </ToolButton>
                    <ToolButton $w={22} $ml={-11} $drop>
                      <Chevron />
                    </ToolButton>
                    <ToolButton $w={66}>
                      <CommentIcon />
                    </ToolButton>
                    <ToolButton $w={22} $ml={-11} $drop>
                      <Chevron />
                    </ToolButton>
                    <ToolButton $w={66}>
                      <TableIcon />
                    </ToolButton>
                    <ToolMenus>
                      <ToolMenu $ml={0}>
                        <CandlesIcon />
                        <Chevron />
                      </ToolMenu>
                      <ToolMenu>
                        1D
                        <Chevron />
                      </ToolMenu>
                      <ToolMenu>
                        Views
                        <Chevron />
                      </ToolMenu>
                      <ToolMenu>
                        Indicators
                        <Chevron />
                      </ToolMenu>
                      <ToolMenu>
                        Events
                        <Chevron />
                      </ToolMenu>
                      <ToolMenu $ml={29} $gap={0}>
                        <FaCog size={24} color="#f0f2f4" />
                        <Chevron />
                      </ToolMenu>
                    </ToolMenus>
                  </Toolbar>

                  <PlotArea>
                    <PriceChart />
                    <QuoteCard>
                      <Symbol>DXB.ASX</Symbol>
                      <QuoteFigures>
                        <LastPrice>47.50</LastPrice>
                        <PriceChange>0.10 (0.00%)</PriceChange>
                      </QuoteFigures>
                    </QuoteCard>
                    <PlotsCard>
                      <PlotsArrow />
                      Plots
                    </PlotsCard>
                    <ZoomControl>
                      <Minus size={20} strokeWidth={3.4} />
                      <Plus size={20} strokeWidth={3.4} />
                    </ZoomControl>
                    <ScrollEnd>
                      <DoubleChevron />
                    </ScrollEnd>
                    <PriceTag>47.50</PriceTag>
                  </PlotArea>

                  <RangeBar>
                    <KeyboardIcon />
                    <RangeList>
                      {ranges.map((range) => (
                        <span key={range}>{range}</span>
                      ))}
                    </RangeList>
                  </RangeBar>
                </ChartColumn>
                <PanelScroll />
                <ResizeGrip>
                  <GripIcon />
                </ResizeGrip>
              </PanelBody>
            </WorkColumn>
          </Workspace>

          <Footer>
            <FooterLeft>
              Market Data provided by
              <IressMark />
              <IressName>iress</IressName>
            </FooterLeft>
            <FooterCenter>CommSec ViewPoint</FooterCenter>
            <FooterRight>
              <FaExpandArrowsAlt size={22} />
            </FooterRight>
          </Footer>
        </InnerWindow>
      </OuterPage>

      <Taskbar>
        <Weather>
          <Sun />
          <WeatherBadge>1</WeatherBadge>
          26°C
        </Weather>
        <StartTiles>
          <StartTile />
          <StartTile />
        </StartTiles>
        <TaskSearch>
          <Search size={20} strokeWidth={2.4} />
          <SearchArt>
            <svg width="60" height="18" viewBox="0 0 60 18">
              <path d="M9 0l7 9H2z" fill="#5f9e3a" />
              <circle cx="30" cy="9" r="7" fill="#e8963c" />
              <path d="M50 0l7 9H43z" fill="#5f9e3a" />
            </svg>
          </SearchArt>
        </TaskSearch>
        <TaskIconBox $ml={31} $w={25} $top={19} $bg="#f7f7f7" $radius="2px" />
        <AppTile>
          <AppDots />
        </AppTile>
        <TaskIconBox $ml={21} $w={34} $top={18} $bg="#e5402c" $radius="50%" />
        <TaskIconBox $ml={33} $w={32} $top={21} $bg="#1a6fd6" $radius="6px" />
        <Tray>
          ENG
          <TrayGlyph $ml={27} $w={22} />
          <TrayGlyph $ml={20} $w={14} />
          <TrayGlyph $ml={12} $w={14} />
          <Clock>11:32 AM</Clock>
        </Tray>
      </Taskbar>
    </Screen>
  );
}
